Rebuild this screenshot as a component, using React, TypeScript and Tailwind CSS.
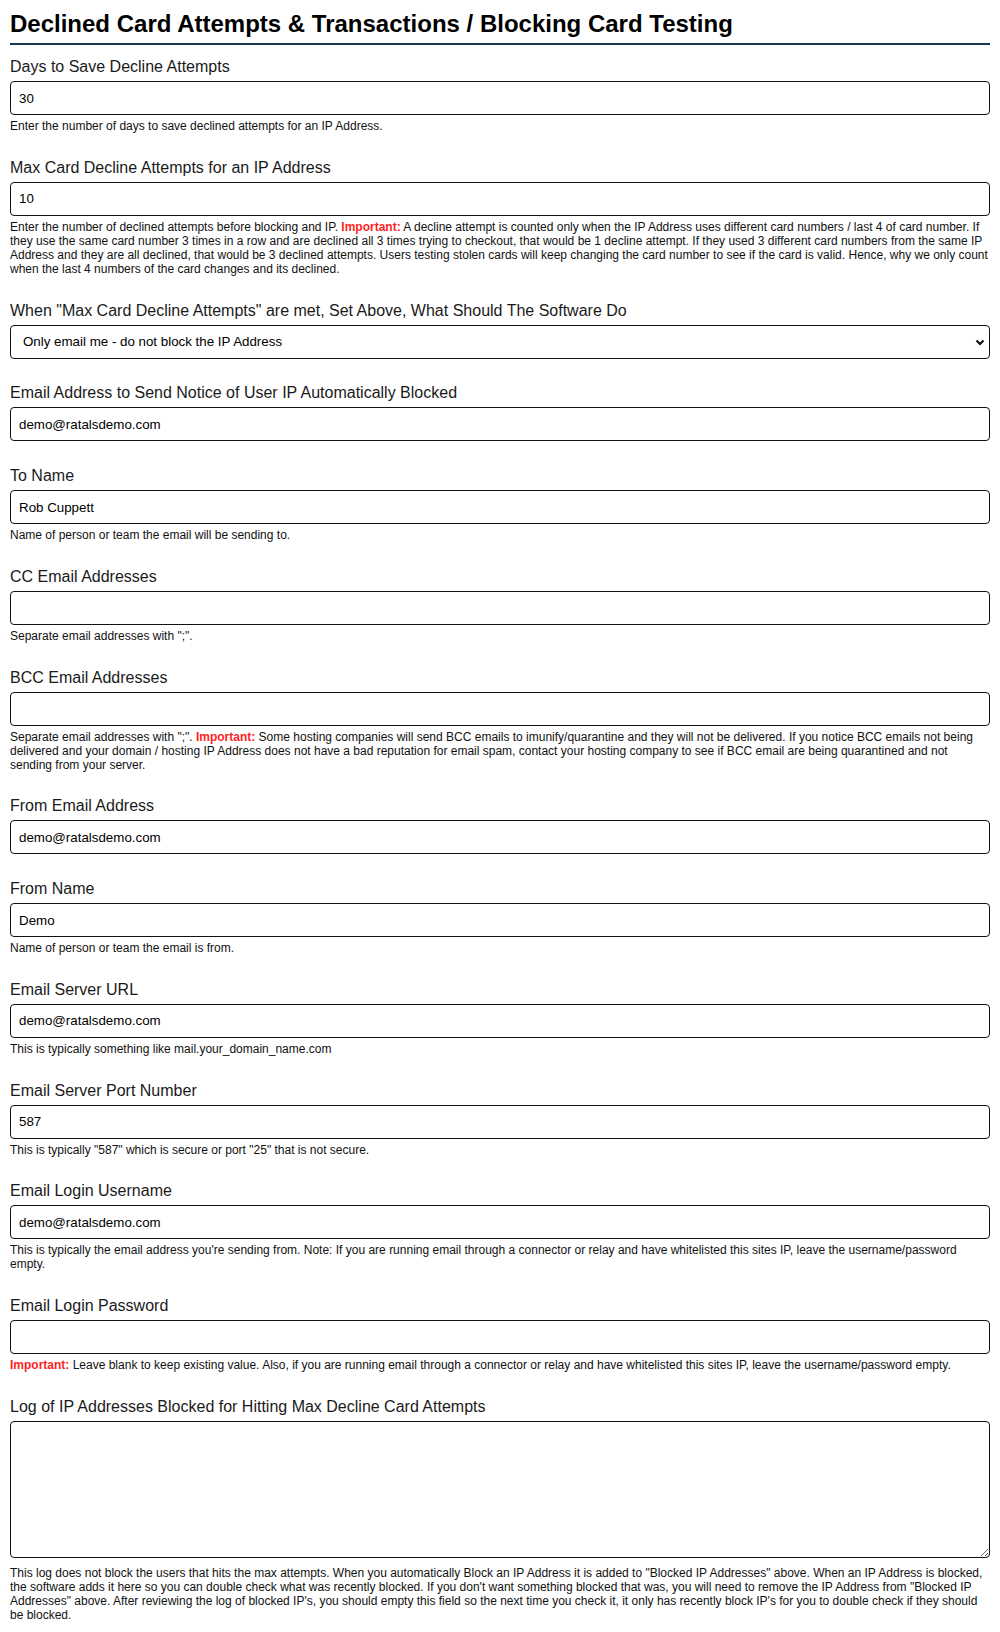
import React from "react";

const Important = () => (
  <span className="font-bold text-[#ff1f1f]">Important:</span>
);

const inputCls =
  "block w-full h-[34px] border border-[#111] rounded-[4px] bg-white px-[8px] text-[13.333px] text-black outline-none";

const Field = ({
  label,
  children,
  help,
  helpTop = "mt-[4px]",
}: {
  label: string;
  children: React.ReactNode;
  help?: React.ReactNode;
  helpTop?: string;
}) => (
  <div className="mb-[24.75px]">
    <label className="block text-[16px] leading-[20px] text-[#1a1a1a] mb-[4px]">
      {label}
    </label>
    {children}
    {help && (
      <p className={`${helpTop} text-[12px] leading-[14px] text-[#111]`}>
        {help}
      </p>
    )}
  </div>
);

const TextInput = ({ value = "", type = "text" }: { value?: string; type?: string }) => (
  <input type={type} defaultValue={value} className={inputCls} />
);

export default function App() {
  return (
    <div className="px-[10px] pt-[10px] bg-white font-['Liberation_Sans',Arial,sans-serif]">
      <h1 className="text-[24px] leading-[28px] font-bold text-black pb-[5px] border-b-2 border-[#1b3a4f]">
        Declined Card Attempts &amp; Transactions / Blocking Card Testing
      </h1>

      <div className="mt-[12px]">
        <Field
          label="Days to Save Decline Attempts"
          help="Enter the number of days to save declined attempts for an IP Address."
        >
          <TextInput value="30" />
        </Field>

        <Field
          label="Max Card Decline Attempts for an IP Address"
          help={
            <>
              Enter the number of declined attempts before blocking and IP.{" "}
              <Important /> A decline attempt is counted only when the IP
              Address uses different card numbers / last 4 of card number. If
              they use the same card number 3 times in a row and are declined
              all 3 times trying to checkout, that would be 1 decline attempt.
              If they used 3 different card numbers from the same IP Address
              and they are all declined, that would be 3 declined attempts.
              Users testing stolen cards will keep changing the card number to
              see if the card is valid. Hence, why we only count when the last 4
              numbers of the card changes and its declined.
            </>
          }
        >
          <TextInput value="10" />
        </Field>

        <Field label='When "Max Card Decline Attempts" are met, Set Above, What Should The Software Do'>
          <div className="relative">
            <select
              defaultValue="email"
              className={`${inputCls} appearance-none pl-[12px]`}
            >
              <option value="email">Only email me - do not block the IP Address</option>
              <option value="block">Block the IP Address and email me</option>
            </select>
            <svg
              className="absolute right-[5px] top-[14px] pointer-events-none"
              width="10"
              height="7"
              viewBox="0 0 10 7"
            >
              <path d="M1.5 1.5 L5 5 L8.5 1.5" fill="none" stroke="#111" strokeWidth="2.2" />
            </svg>
          </div>
        </Field>

        <Field label="Email Address to Send Notice of User IP Automatically Blocked">
          <TextInput value="demo@ratalsdemo.com" />
        </Field>

        <Field label="To Name" help="Name of person or team the email will be sending to.">
          <TextInput value="Rob Cuppett" />
        </Field>

        <Field label="CC Email Addresses" help={'Separate email addresses with ";".'}>
          <TextInput />
        </Field>

        <Field
          label="BCC Email Addresses"
          help={
            <>
              Separate email addresses with ";". <Important /> Some hosting
              companies will send BCC emails to imunify/quarantine and they will
              not be delivered. If you notice BCC emails not being delivered and
              your domain / hosting IP Address does not have a bad reputation
              for email spam, contact your hosting company to see if BCC email
              are being quarantined and not sending from your server.
            </>
          }
        >
          <TextInput />
        </Field>

        <Field label="From Email Address">
          <TextInput value="demo@ratalsdemo.com" />
        </Field>

        <Field label="From Name" help="Name of person or team the email is from.">
          <TextInput value="Demo" />
        </Field>

        <Field
          label="Email Server URL"
          help="This is typically something like mail.your_domain_name.com"
        >
          <TextInput value="demo@ratalsdemo.com" />
        </Field>

        <Field
          label="Email Server Port Number"
          help={'This is typically "587" which is secure or port "25" that is not secure.'}
        >
          <TextInput value="587" />
        </Field>

        <Field
          label="Email Login Username"
          help="This is typically the email address you're sending from. Note: If you are running email through a connector or relay and have whitelisted this sites IP, leave the username/password empty."
        >
          <TextInput value="demo@ratalsdemo.com" />
        </Field>

        <Field
          label="Email Login Password"
          help={
            <>
              <Important /> Leave blank to keep existing value. Also, if you
              are running email through a connector or relay and have
              whitelisted this sites IP, leave the username/password empty.
            </>
          }
        >
          <TextInput type="password" />
        </Field>

        <Field
          label="Log of IP Addresses Blocked for Hitting Max Decline Card Attempts"
          helpTop="mt-[8px]"
          help={
            <>
              This log does not block the users that hits the max attempts.
              When you automatically Block an IP Address it is added to "Blocked
              IP Addresses" above. When an IP Address is blocked, the software
              adds it here so you can double check what was recently blocked. If
              you don't want something blocked that was, you will need to remove
              the IP Address from "Blocked IP Addresses" above. After reviewing
              the log of blocked IP's, you should empty this field so the next
              time you check it, it only has recently block IP's for you to
              double check if they should be blocked.
            </>
          }
        >
          <textarea className="block w-full h-[137px] border border-[#111] rounded-[4px] bg-white px-[8px] py-[6px] text-[13.333px] outline-none resize-y" />
        </Field>
      </div>
    </div>
  );
}
